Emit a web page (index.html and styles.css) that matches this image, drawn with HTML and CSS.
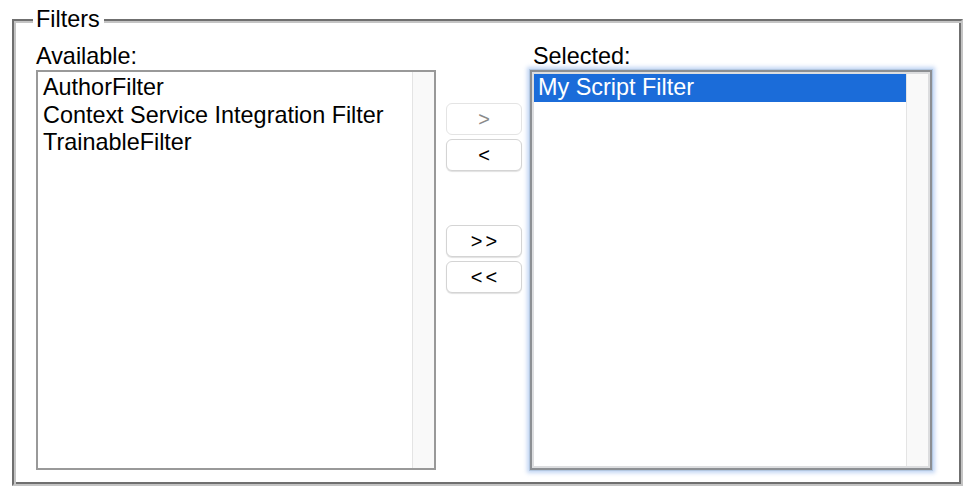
FILE: index.html
```html
<!DOCTYPE html>
<html>
<head>
<meta charset="utf-8">
<link rel="stylesheet" href="styles.css">
</head>
<body>
<fieldset class="filters">
  <legend class="filters-legend">Filters</legend>
  <div class="columns">
    <div class="col col-left">
      <div class="label">Available:</div>
      <div class="listbox">
        <ul class="items">
          <li class="item">AuthorFilter</li>
          <li class="item">Context Service Integration Filter</li>
          <li class="item">TrainableFilter</li>
        </ul>
        <div class="scrollbar"></div>
      </div>
    </div>
    <div class="col col-mid">
      <div class="btn-group">
        <button class="btn btn-disabled">&gt;</button>
        <button class="btn">&lt;</button>
      </div>
      <div class="btn-group">
        <button class="btn btn-double">&gt;&gt;</button>
        <button class="btn btn-double">&lt;&lt;</button>
      </div>
    </div>
    <div class="col col-right">
      <div class="label label-right">Selected:</div>
      <div class="listbox listbox-focus">
        <ul class="items">
          <li class="item item-selected">My Script Filter</li>
        </ul>
        <div class="scrollbar"></div>
      </div>
    </div>
  </div>
</fieldset>
</body>
</html>
```

FILE: styles.css
```css
html, body {
  margin: 0;
  padding: 0;
  background: #ffffff;
}

body {
  font-family: "Liberation Sans", Arial, Helvetica, sans-serif;
  color: #000;
}

.filters {
  box-sizing: border-box;
  width: 951px;
  margin: 6px 0 0 12px;
  padding: 9px 25px 14px 22px;
  border: 2px solid;
  border-color: #6f6f6f #c4c4c4 #c4c4c4 #6f6f6f;
  box-shadow: inset 2px 2px 0 #c4c4c4, inset -2px -2px 0 #6f6f6f;
  min-width: 0;
}

.filters-legend {
  font-size: 23.4px;
  line-height: 27px;
  padding: 0 4px 0 3px;
  margin-left: -3px;
  background: #fff;
}

.columns {
  display: flex;
}

.col {
  display: flex;
  flex-direction: column;
}

.col-left {
  width: 400px;
}

.col-mid {
  width: 94px;
  padding: 61px 0 0 10px;
  box-sizing: border-box;
  gap: 54px;
}

.col-right {
  width: 402px;
}

.label {
  font-size: 23.4px;
  line-height: 28px;
  height: 28px;
}

.label-right {
  padding-left: 3px;
}

.listbox {
  box-sizing: border-box;
  height: 400px;
  border: 2px solid #999999;
  display: flex;
  background: #fff;
}

.listbox-focus {
  border-color: #8c8f93;
  padding: 2px;
  box-shadow: inset 0 0 0 2px #dcdddf, 0 0 0 1px #b3c7e0, 0 0 4px 3px rgba(120, 165, 230, 0.45);
}

.items {
  list-style: none;
  margin: 0;
  padding: 2px 0 0 0;
  flex: 1;
}

.listbox-focus .items {
  padding-top: 0;
}

.item {
  font-size: 23.4px;
  line-height: 27.5px;
  padding-left: 5px;
  white-space: nowrap;
}

.item-selected {
  background: #1b6cd9;
  color: #fff;
  padding-left: 4px;
}

.scrollbar {
  width: 21px;
  background: #f9f9f9;
  border-left: 1px solid #e4e4e4;
}

.btn-group {
  display: flex;
  flex-direction: column;
  gap: 4px;
}

.btn {
  box-sizing: border-box;
  width: 76px;
  height: 32px;
  margin: 0;
  padding: 0;
  background: #fff;
  border: 1px solid #d4d4d4;
  border-radius: 6px;
  box-shadow: 0 1px 1px rgba(0, 0, 0, 0.12);
  font-family: "Liberation Sans", Arial, Helvetica, sans-serif;
  font-size: 20px;
  line-height: 30px;
  color: #000;
}

.btn-double {
  letter-spacing: 3px;
  padding-left: 3px;
}

.btn-disabled {
  color: #8a8a8a;
  border-color: #e4e4e4;
  box-shadow: none;
}
```
